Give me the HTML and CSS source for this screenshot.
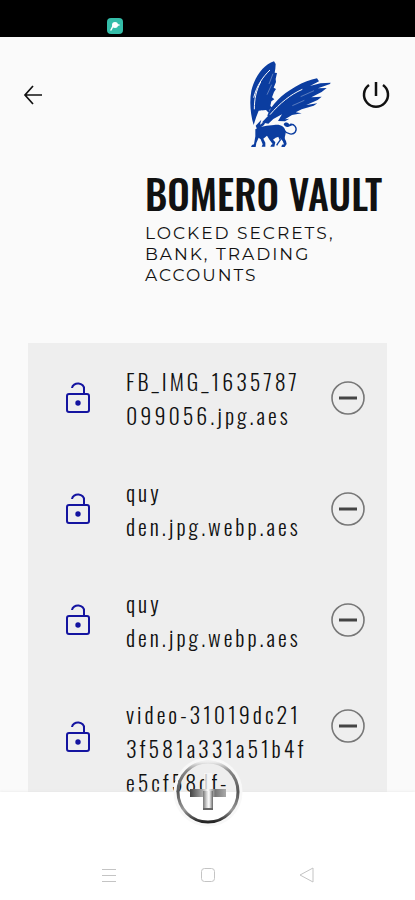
FILE: index.html
```html
<!DOCTYPE html>
<html lang="en">
<head>
    <meta charset="UTF-8">
    <meta name="viewport" content="width=device-width, initial-scale=1.0">
    <title>Bomero Vault</title>
    <link rel="stylesheet" href="styles.css">
</head>
<body>

    <div class="status-bar">
        <svg class="status-icon" viewBox="0 0 16 16">
            <rect width="16" height="16" rx="4" fill="#35bda9"/>
            <circle cx="8" cy="7" r="3" fill="#fff"/>
            <path d="M6 8L4 12M9 7h3" stroke="#fff" stroke-width="1.5" stroke-linecap="round"/>
        </svg>
    </div>

    <header>
        <div class="top-nav">
            <button class="icon-btn" aria-label="Back">
                <svg width="20" height="20" viewBox="0 0 20 20" fill="none" stroke="#111" stroke-width="1.7">
                    <path d="M19 10H2M10 1L2 10L10 19"/>
                </svg>
            </button>
            <svg class="logo" viewBox="45 27 249 264" fill="#0b3da0">
                <!-- left wing -->
                <path d="M120 31C88 42 62 77 52 119C46 151 49 190 59 222C64 204 69 192 74 179L96 177L104 185L108 174L116 171L109 165L112 151L121 145L114 139L120 123L126 114L119 110L126 93L125 84L129 66L122 65L124 53L125 39Z"/>
                <path d="M108 57C85 79 68 105 59 140M80 93C66 119 61 145 61 175" fill="none" stroke="#fafafa" stroke-width="3"/>
                <path d="M117 68L105 99M113 101L99 131" fill="none" stroke="#fafafa" stroke-width="1"/>
                <!-- right wing -->
                <path d="M249 82C211 88 157 120 131 147C115 163 105 179 101 191L82 214L103 218L118 204L144 190L132 210L153 211L166 203L153 205L174 192L203 187L185 184L203 175L239 164L250 157L217 162L251 147L263 137L232 139L263 123L278 111L252 112L288 99L290 95L259 97L228 105L255 91Z"/>
                <path d="M205 115C170 130 137 157 108 191" fill="none" stroke="#fafafa" stroke-width="3"/>
                <path d="M240 119L200 137M211 148L175 164" fill="none" stroke="#fafafa" stroke-width="1"/>
                <path d="M81 178L74 224L102 195L91 186Z" fill="#fafafa"/>
                <path d="M65 224L82 206L78 221L98 207L90 222L70 236Z"/>
                <!-- body and legs -->
                <path d="M64 235C79 225 101 224 120 222C137 218 153 226 155 242C156 253 148 260 156 270L158 279L152 288H142L144 281L150 280L146 270L134 257L125 260L117 266L124 274L121 287H109L112 281L116 279L107 267L99 254L88 263L94 275L94 287H83L86 280L80 265L74 260L67 276L65 288H51L54 282L60 280L64 256Z"/>
                <path d="M134 255L139 267L131 278L128 283" fill="none" stroke="#0b3da0" stroke-width="4"/>
                <path d="M151 239C159 250 177 253 184 243C191 231 181 218 168 220" fill="none" stroke="#0b3da0" stroke-width="4"/>
                <path d="M149 220C151 214 160 212 166 220L175 223L162 228C156 229 152 226 149 220Z"/>
            </svg>
            <button class="icon-btn" aria-label="Log out">
                <svg width="28" height="28" viewBox="0 0 28 28" fill="none" stroke="#111" stroke-width="2.5">
                    <path d="M14 1V15M7 4A12 12 0 1 0 21 4"/>
                </svg>
            </button>
        </div>
        <div class="brand">
            <h1>BOMERO VAULT</h1>
            <p>LOCKED SECRETS, BANK, TRADING ACCOUNTS</p>
        </div>
    </header>

    <!-- shared icons -->
    <svg class="defs" width="0" height="0">
        <symbol id="unlock" viewBox="0 0 24 32">
            <g fill="none" stroke="#1414a0" stroke-width="2">
                <rect x="1" y="12" width="22" height="18" rx="2"/>
                <path d="M18 12V7A6 5 0 0 0 6 6"/>
            </g>
            <circle cx="12" cy="21" r="2.7" fill="#1414a0"/>
        </symbol>
        <symbol id="minus" viewBox="0 0 34 34">
            <circle cx="17" cy="17" r="16" fill="none" stroke="#777" stroke-width="1.6"/>
            <path d="M8 17H26" stroke="#444" stroke-width="3"/>
        </symbol>
    </svg>

    <main>
        <ul class="file-list">
            <li>
                <button class="unlock" aria-label="Unlock"><svg><use href="#unlock"/></svg></button>
                <span class="name">FB_IMG_1635787<br>099056.jpg.aes</span>
                <button class="remove" aria-label="Remove"><svg><use href="#minus"/></svg></button>
            </li>
            <li>
                <button class="unlock" aria-label="Unlock"><svg><use href="#unlock"/></svg></button>
                <span class="name">quy<br>den.jpg.webp.aes</span>
                <button class="remove" aria-label="Remove"><svg><use href="#minus"/></svg></button>
            </li>
            <li>
                <button class="unlock" aria-label="Unlock"><svg><use href="#unlock"/></svg></button>
                <span class="name">quy<br>den.jpg.webp.aes</span>
                <button class="remove" aria-label="Remove"><svg><use href="#minus"/></svg></button>
            </li>
            <li class="tall">
                <button class="unlock" aria-label="Unlock"><svg><use href="#unlock"/></svg></button>
                <span class="name">video-31019dc21<br>3f581a331a51b4f<br>e5cf58df-</span>
                <button class="remove" aria-label="Remove"><svg><use href="#minus"/></svg></button>
            </li>
        </ul>
    </main>

    <footer>
        <button class="add-btn" aria-label="Add file">
            <svg width="74" height="74" viewBox="0 0 74 74">
                <defs>
                    <linearGradient id="ring" x1="0" y1="0" x2="0" y2="1">
                        <stop offset="0" stop-color="#eee"/>
                        <stop offset="0.15" stop-color="#888"/>
                        <stop offset="0.5" stop-color="#555"/>
                        <stop offset="0.8" stop-color="#999"/>
                        <stop offset="1" stop-color="#222"/>
                    </linearGradient>
                    <linearGradient id="barH">
                        <stop offset="0" stop-color="#444"/>
                        <stop offset="0.35" stop-color="#aaa"/>
                        <stop offset="0.5" stop-color="#fff"/>
                        <stop offset="0.7" stop-color="#777"/>
                        <stop offset="1" stop-color="#aaa"/>
                    </linearGradient>
                    <linearGradient id="barV">
                        <stop offset="0" stop-color="#777"/>
                        <stop offset="0.4" stop-color="#ddd"/>
                        <stop offset="0.6" stop-color="#fff"/>
                        <stop offset="1" stop-color="#666"/>
                    </linearGradient>
                </defs>
                <circle cx="37" cy="37" r="33" fill="none" stroke="#f8f8f8" stroke-width="3"/>
                <circle cx="37" cy="37" r="30" fill="none" stroke="url(#ring)" stroke-width="3"/>
                <path d="M33 18H41V34H33Z" fill="#f6f6f6" fill-opacity="0.8"/>
                <path d="M19 34H55V42H19Z" fill="url(#barH)"/>
                <path d="M32 36H42V55H32Z" fill="url(#barV)"/>
                <path d="M32 54H42" stroke="#666" stroke-width="2"/>
            </svg>
        </button>
        <nav class="system-nav">
            <button aria-label="Recent apps">
                <svg width="16" height="16" viewBox="0 0 16 16" fill="none" stroke="#c4c4c4" stroke-width="1">
                    <path d="M1 2.5H15M1 8.5H15M1 14.5H15"/>
                </svg>
            </button>
            <button aria-label="Home">
                <svg width="16" height="16" viewBox="0 0 16 16" fill="none" stroke="#c4c4c4" stroke-width="1">
                    <rect x="1.5" y="1.5" width="13" height="13" rx="3"/>
                </svg>
            </button>
            <button aria-label="Go back">
                <svg width="16" height="16" viewBox="0 0 16 16" fill="none" stroke="#c4c4c4" stroke-width="1" stroke-linejoin="round">
                    <path d="M14 1V15L1 8Z"/>
                </svg>
            </button>
        </nav>
    </footer>

</body>
</html>
```
FILE: styles.css
```css
* {
    box-sizing: border-box;
}
body {
    margin: 0;
    height: 100vh;
    display: flex;
    flex-direction: column;
    overflow: hidden;
    background-color: #fafafa;
    color: #111;
    font-family: Oswald, "Liberation Sans Narrow", "Arial Narrow", sans-serif;
}
button {
    display: flex;
    align-items: center;
    justify-content: center;
    padding: 0;
    border: none;
    background: none;
    cursor: pointer;
}
.status-bar {
    height: 37px;
    padding: 18px 0 0 107px;
    background-color: #000;
}
.status-icon {
    display: block;
    width: 16px;
    height: 16px;
}
.top-nav {
    display: flex;
    align-items: flex-start;
    padding: 23px 19px 0;
}
.icon-btn {
    width: 40px;
    height: 40px;
    margin-top: 15px;
}
.top-nav .icon-btn:first-child {
    width: 28px;
    margin-right: auto;
}
.logo {
    width: 83px;
    height: 88px;
    margin-right: 24px;
}
.brand {
    margin: 23px 24px 0 145px;
}
h1 {
    margin: 0;
    font-size: 40px;
    font-weight: 500;
    line-height: 44px;
    white-space: nowrap;
}
.brand p {
    margin: 8px 0 0;
    font-family: Montserrat, Lato, sans-serif;
    font-size: 17px;
    line-height: 21px;
    letter-spacing: 2px;
}
.defs {
    position: absolute;
}
main {
    flex: 1;
    min-height: 0;
    margin: 57px 28px 0;
    overflow: hidden;
    background-color: #eee;
}
.file-list {
    margin: 0;
    padding: 0;
    list-style: none;
}
.file-list li {
    display: flex;
    align-items: center;
    padding: 21px 22px 22px 38px;
}
.name {
    flex: 1;
    margin-left: 36px;
    font-size: 22px;
    font-weight: 350;
    line-height: 34px;
    letter-spacing: 3px;
    white-space: nowrap;
}
.unlock svg {
    width: 24px;
    height: 32px;
}
.remove svg {
    width: 34px;
    height: 34px;
}
.file-list .tall {
    align-items: flex-start;
}
.tall .unlock {
    margin-top: 24px;
}
.tall .remove {
    margin-top: 12px;
}
footer {
    position: relative;
    height: 108px;
    padding-top: 75px;
    background-color: #fff;
    box-shadow: 0 0 3px #e4e4e4;
}
.add-btn {
    position: absolute;
    top: -37px;
    left: 50%;
    transform: translateX(-50%);
}
.system-nav {
    display: flex;
    justify-content: center;
    gap: 83px;
}
```
